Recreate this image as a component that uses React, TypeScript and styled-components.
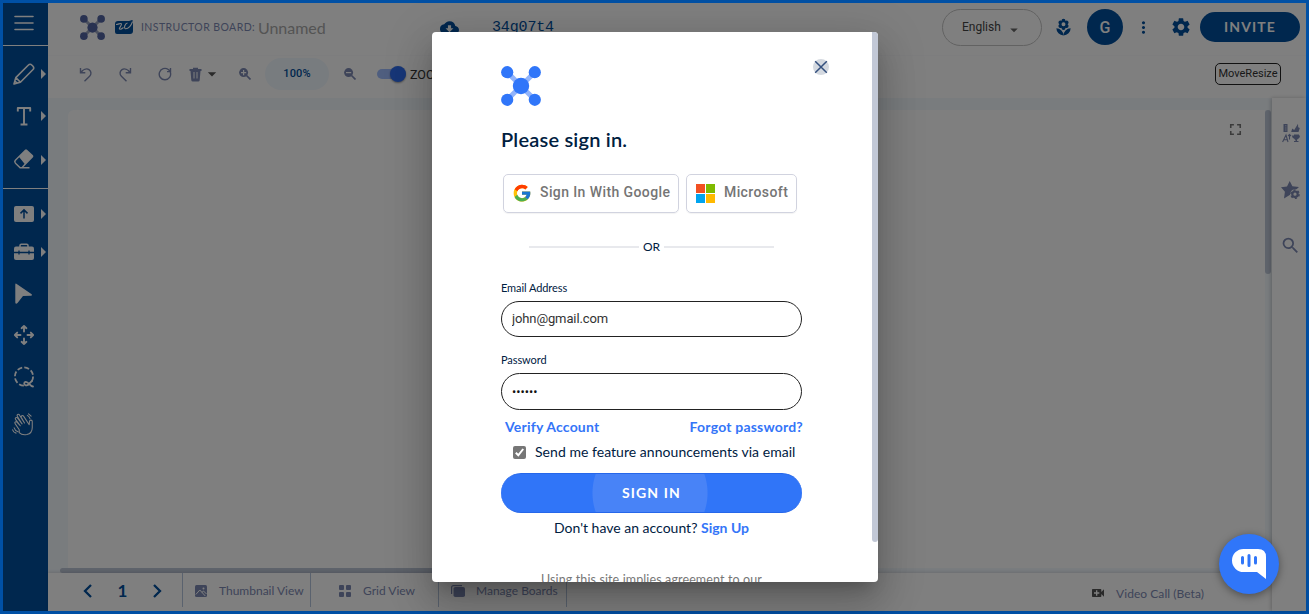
import React from 'react';
import styled, { createGlobalStyle } from 'styled-components';
import {
  MdCloudDownload, MdSettings, MdMoreVert, MdLocalFlorist, MdArrowDropDown,
  MdFullscreen, MdSearch, MdVideoCall,
} from 'react-icons/md';

const GlobalStyle = createGlobalStyle`
  *, *::before, *::after { box-sizing: border-box; }
  body { margin: 0; overflow: hidden; font-family: Lato, "Liberation Sans", sans-serif; }
  button, input { font: inherit; margin: 0; }
  svg { display: block; flex: none; }
`;

const NAVY = '#004e9c';
const SLATE = '#7d89b2';

/* ---------- page frame ---------- */
const Frame = styled.div`
  position: relative;
  display: flex;
  width: 1309px;
  height: 614px;
  border: 3px solid #0050a5;
  background: #fff;
`;
const Main = styled.div`
  flex: 1;
  min-width: 0;
  display: flex;
  flex-direction: column;
`;
const Gap = styled.span<{ $w: number }>`
  width: ${p => p.$w}px;
  flex: none;
`;

/* ---------- left tool rail ---------- */
const Rail = styled.nav`
  width: 45px;
  flex: none;
  display: flex;
  flex-direction: column;
  background: ${NAVY};
  color: #fff;
`;
const RailItem = styled.div<{ $h: number; $line?: boolean }>`
  height: ${p => p.$h}px;
  display: flex;
  align-items: center;
  padding-left: 10px;
  gap: 6px;
  border-bottom: ${p => (p.$line ? '1px solid #fff' : 'none')};
`;
const Flyout = styled.span`
  width: 0;
  height: 0;
  border: solid transparent;
  border-width: 5.5px 0 5.5px 5.5px;
  border-left-color: #fff;
`;

/* ---------- header ---------- */
const Header = styled.header`
  height: 53px;
  display: flex;
  align-items: center;
  padding: 0 6px 4px 32px;
  border-bottom: 1px solid #fbfbfd;
`;
const BoardLabel = styled.span`
  margin-left: 8px;
  font-size: 10.5px;
  letter-spacing: 0.42px;
  color: ${SLATE};
  white-space: nowrap;
  width: 117px;
`;
const BoardName = styled.span`
  width: 182px;
  font-size: 16px;
  letter-spacing: -0.05px;
  color: #a8a8a8;
`;
const BoardCode = styled.span`
  margin: 0 auto 0 33px;
  font: 15px "Liberation Mono", monospace;
  letter-spacing: -0.15px;
  color: ${NAVY};
`;
const Language = styled.div`
  width: 100px;
  height: 37px;
  display: flex;
  align-items: center;
  gap: 4px;
  padding-left: 19px;
  border: 1px solid #c4c4c4;
  border-radius: 19px;
  font: 12px Roboto, sans-serif;
  color: #444;
  svg { margin-top: 6px; }
`;
const Avatar = styled.div`
  width: 36px;
  height: 36px;
  margin: 0 11px 0 14px;
  display: grid;
  place-items: center;
  border-radius: 50%;
  background: ${NAVY};
  color: #fff;
  font: 500 16px Roboto, sans-serif;
`;
const Invite = styled.button`
  width: 100px;
  height: 30px;
  margin-left: 8px;
  padding: 0 0 1px;
  border: 0;
  border-radius: 15px;
  background: ${NAVY};
  color: #fff;
  font-size: 14px;
  font-weight: 700;
  letter-spacing: 1.15px;
`;

/* ---------- toolbar ---------- */
const Toolbar = styled.div`
  height: 42px;
  display: flex;
  align-items: center;
  padding: 0 25px 6px 31px;
  color: ${SLATE};
`;
const Tool = styled.span<{ $gap: number }>`
  display: flex;
  align-items: center;
  margin-right: ${p => p.$gap}px;
`;
const ZoomLevel = styled.span`
  width: 64px;
  height: 32px;
  margin-right: 15px;
  display: grid;
  place-items: center;
  padding-bottom: 1px;
  border-radius: 16px;
  background: #f1f8ff;
  color: ${NAVY};
  font: 500 11px Roboto, sans-serif;
  letter-spacing: 0.15px;
`;
const Switch = styled.span`
  width: 29px;
  height: 10px;
  margin: 0 4px 0 21px;
  display: flex;
  align-items: center;
  justify-content: flex-end;
  border-radius: 5px;
  background: #9fbcff;
  &::after {
    content: '';
    width: 16px;
    height: 16px;
    border-radius: 50%;
    background: #2f6dee;
    box-shadow: 0 1px 2px rgba(0, 0, 0, 0.4);
  }
`;
const SwitchLabel = styled.span`
  margin-right: auto;
  font: 12.5px Roboto, sans-serif;
  color: #333;
`;
const MoveResize = styled.span`
  width: 66px;
  height: 22px;
  display: grid;
  place-items: center;
  padding-bottom: 2px;
  border: 1px solid #222;
  border-radius: 5px;
  font: 11px Roboto, sans-serif;
  color: #333;
`;

/* ---------- board ---------- */
const Workspace = styled.div`
  flex: 1;
  min-height: 0;
  display: flex;
`;
const BoardColumn = styled.div`
  width: 1224px;
  display: flex;
  flex-direction: column;
`;
const BoardArea = styled.div`
  height: 475px;
  flex: none;
  display: grid;
  grid-template: 12px 458px 5px / 12px 8px 1197px 7px;
  background: #f2f8fd;
`;
const Sheet = styled.div`
  grid-area: 2 / 3;
  display: flex;
  justify-content: flex-end;
  padding: 10px 20px 0 0;
  border-radius: 6px 0 0 0;
  background: #fff;
  color: #777;
`;
const ScrollY = styled.div`
  grid-area: 2 / 4;
  width: 6px;
  height: 164px;
  border-radius: 3px;
  background: #bdc6d6;
`;
const ScrollX = styled.div`
  grid-area: 3 / 2 / 4 / 4;
  width: 580px;
  border-radius: 3px;
  background: #bdc6d6;
`;
const SidePanel = styled.aside`
  width: 34px;
  display: flex;
  flex-direction: column;
  align-items: center;
  padding: 25px 0 0 3px;
  background: #fff;
  color: ${SLATE};
  box-shadow: -1px 0 4px rgba(0, 0, 0, 0.22);
`;
const SideIcon = styled.span<{ $gap: number }>`
  margin-bottom: ${p => p.$gap}px;
`;

/* ---------- footer ---------- */
const Footer = styled.footer`
  height: 38px;
  flex: none;
  display: flex;
  color: ${SLATE};
  background: #fff;
  box-shadow: 0 -1px 3px rgba(0, 0, 0, 0.12);
`;
const Pager = styled.div`
  width: 135px;
  height: 34px;
  display: flex;
  align-items: center;
  justify-content: space-between;
  padding: 1px 20px 0 35px;
  border-right: 1px solid #b4c4dc;
  color: ${NAVY};
  font-size: 17px;
  font-weight: 700;
`;
const ViewTab = styled.div<{ $pad: number; $gap: number }>`
  width: 128px;
  height: 34px;
  display: flex;
  align-items: center;
  gap: ${p => p.$gap}px;
  padding: 1px 0 0 ${p => p.$pad}px;
  border-right: 1px solid #b4c4dc;
  font-size: 12px;
  white-space: nowrap;
`;
const VideoCall = styled.div`
  height: 38px;
  margin-left: auto;
  display: flex;
  align-items: center;
  gap: 10px;
  padding: 2px 68px 0 0;
  font-size: 12px;
  letter-spacing: 0.05px;
  svg { color: #555; }
`;

/* ---------- overlay and dialog ---------- */
const Backdrop = styled.div`
  position: absolute;
  inset: 0;
  display: flex;
  justify-content: center;
  align-items: center;
  background: rgba(0, 0, 0, 0.5);
`;
const Dialog = styled.div`
  width: 446px;
  height: 550px;
  margin-left: 1px;
  display: flex;
  border-radius: 4px;
  overflow: hidden;
  background: #fff;
  color: #00203f;
  box-shadow: 0 11px 15px -7px rgba(0, 0, 0, 0.2), 0 24px 38px 3px rgba(0, 0, 0, 0.14),
    0 9px 46px 8px rgba(0, 0, 0, 0.12);
`;
const DialogScroll = styled.div`
  width: 440px;
  height: 550px;
  overflow: hidden;
  padding: 27px 70px 0 69px;
  display: flex;
  flex-direction: column;
`;
const DialogBar = styled.div`
  width: 6px;
  height: 510px;
  border-radius: 0 0 3px 3px;
  background: #c2c8d6;
`;
const DialogTop = styled.div`
  height: 47px;
  flex: none;
  display: flex;
  justify-content: space-between;
  margin-right: -27px;
  > :first-child { margin-top: 7px; }
`;
const CloseButton = styled.span`
  width: 16px;
  height: 16px;
  display: grid;
  place-items: center;
  border-radius: 50%;
  background: #d4d9e0;
`;
const Title = styled.h2`
  margin: 18px 0 0;
  font-size: 20px;
  line-height: 30px;
  font-weight: 600;
  letter-spacing: 0.2px;
  white-space: nowrap;
`;
const Providers = styled.div`
  display: flex;
  gap: 7px;
  margin: 20px 0 0 2px;
`;
const Provider = styled.div<{ $w: number; $pad: number; $gap: number }>`
  width: ${p => p.$w}px;
  height: 39px;
  display: flex;
  align-items: center;
  gap: ${p => p.$gap}px;
  padding: 0 0 0 ${p => p.$pad}px;
  border: 1px solid #d1d3df;
  border-radius: 5px;
  box-shadow: 0 1px 1px rgba(0, 0, 0, 0.05);
  color: #757575;
  font: 500 14px Roboto, sans-serif;
  letter-spacing: 0.4px;
  white-space: nowrap;
  span { margin-top: -3px; }
`;
const Divider = styled.div`
  width: 245px;
  height: 16px;
  margin: 26px 0 0 28px;
  display: flex;
  align-items: center;
  gap: 4px;
  font-size: 12px;
  &::before, &::after {
    content: '';
    flex: 1;
    height: 2px;
    background: #e8e9ed;
  }
`;
const Label = styled.label<{ $top: number }>`
  height: 16px;
  margin-top: ${p => p.$top}px;
  font-size: 11px;
  line-height: 16px;
  letter-spacing: -0.08px;
`;
const Input = styled.input<{ $h: number }>`
  width: 301px;
  height: ${p => p.$h}px;
  margin-top: 5px;
  flex: none;
  padding: 0 10px 2px;
  border: 1px solid #222;
  border-radius: 19px;
  outline: 0;
  background: #fff;
  color: #333;
  font: 13px Roboto, sans-serif;
  letter-spacing: -0.12px;
  &[type='password'] { font-size: 12.5px; letter-spacing: 0.05px; padding-bottom: 1px; color: #111; }
`;
const Links = styled.div`
  height: 20px;
  margin: 7px -1px 0 4px;
  display: flex;
  justify-content: space-between;
  font-size: 14px;
  line-height: 20px;
  letter-spacing: 0.2px;
`;
const Link = styled.a`
  color: #3475f8;
  font-weight: 700;
`;
const Consent = styled.label`
  height: 20px;
  margin: 6px 0 0 12px;
  display: flex;
  align-items: center;
  gap: 9px;
  font-size: 14px;
  letter-spacing: 0.04px;
  white-space: nowrap;
`;
const Check = styled.span`
  width: 13px;
  height: 13px;
  margin-top: 1px;
  border-radius: 2px;
  background: #767676;
`;
const SignIn = styled.button`
  width: 301px;
  height: 40px;
  flex: none;
  margin-top: 13px;
  padding: 0 0 1px;
  border: 1px solid #2667ea;
  border-width: 1px 0;
  border-radius: 20px;
  background: radial-gradient(circle at 149px 19px, #4883f7 57px, #3075f8 58px);
  color: #fff;
  font-size: 14px;
  font-weight: 700;
  letter-spacing: 1.1px;
`;
const SignUp = styled.p`
  margin: 5px 0 0;
  text-align: center;
  font-size: 14px;
  line-height: 20px;
`;
const Legal = styled.p`
  margin: 33px 0 0;
  text-align: center;
  font-size: 12.5px;
  line-height: 18px;
  letter-spacing: 0.12px;
  color: #777;
`;
const ChatBubble = styled.div`
  position: absolute;
  left: 1216px;
  top: 531px;
  width: 60px;
  height: 60px;
  display: grid;
  place-items: center;
  border-radius: 50%;
  background: #3076f9;
  box-shadow: 0 2px 8px rgba(0, 0, 0, 0.4);
`;

/* ---------- drawings ---------- */
const Molecule = ({ size, color, arm }: { size: number; color: string; arm: string }) => (
  <svg width={size} height={size} viewBox="0 0 40 40">
    <path d="M6 6 34 34M34 6 6 34" stroke={arm} strokeWidth="5" />
    <g fill={color}>
      <circle cx="6.2" cy="6.2" r="6.1" /><circle cx="33.8" cy="6.2" r="6.1" />
      <circle cx="6.2" cy="33.8" r="6.1" /><circle cx="33.8" cy="33.8" r="6.1" />
      <circle cx="20" cy="20" r="8.2" />
    </g>
  </svg>
);

const Line = ({ children, size = 22, width = 1.6 }: { children: React.ReactNode; size?: number; width?: number }) => (
  <svg width={size} height={size} viewBox="0 0 22 22" fill="none" stroke="currentColor"
    strokeWidth={width} strokeLinecap="round" strokeLinejoin="round">{children}</svg>
);

const Hamburger = () => <Line><path d="M2 3.5h18M2 10h18M2 16.5h18" /></Line>;
const Pencil = () => (
  <Line><path d="m1 21 1.8-6.4L15.2 2.2a2.7 2.7 0 0 1 3.8 0l.8.8a2.7 2.7 0 0 1 0 3.8L7.4 19.2ZM3 14.7l4.3 4.4M2.1 18.2l1.7 1.7" /></Line>
);
const TextTool = () => <Line width={1.9}><path d="M4.8 5.5V3h12.4v2.5M11 3v16.5M8.5 19.5h5" strokeLinecap="square" /></Line>;
const Eraser = () => (
  <svg width="22" height="22" viewBox="0 0.5 22 22" fill="currentColor">
    <path fillRule="evenodd" d="M12 1.2q1-.7 2 0l6 5.6q.8 1 0 2L10.5 18.6H16.5v1.5H6.8L2 15.3q-1.8-2-.4-3.8ZM6.300 8.8 2.9 12.300q-.7.9 0 1.900L7.400 18.500h1.300l2.800-3.300Z" />
  </svg>
);
const Upload = () => (
  <svg width="22" height="22" viewBox="0 0 22 22">
    <rect x="1" y="3" width="20" height="16" rx="2" fill="currentColor" />
    <path d="M11 15.5V7M7.5 10.4 11 6.9l3.5 3.500" fill="none" stroke={NAVY} strokeWidth="1.5" />
  </svg>
);
const Toolbox = () => (
  <svg width="22" height="22" viewBox="0 0 22 22">
    <path d="M7 6V4.500q0-1.300 1.300-1.300h5.400q1.300 0 1.300 1.300V6" fill="none" stroke="currentColor" strokeWidth="1.5" />
    <path d="M3 5.500h16q2 0 2 2V17q0 2-2 2H3q-2 0-2-2V7.500q0-2 2-2Z" fill="currentColor" />
    <path d="M1 11.500h20M6 9.500v4M16 9.500v4" stroke={NAVY} strokeWidth="1.3" />
  </svg>
);
const Cursor = () => (
  <svg width="22" height="22" viewBox="0 0 22 22" fill="currentColor">
    <path d="M2.300 1.600q0-1.500 1.400-.7l15 10.300q1 1.400-.7 1.500l-8 .4-5.500 7q-1.900 1.400-2.200-.7Z" />
  </svg>
);
const Move = () => (
  <Line width={1.9}><path d="M11 7.500V2M11 14.500V20M7.500 11H2M14.500 11H20M8.600 4.200 11 1.900l2.400 2.300M8.600 17.800l2.400 2.300 2.400-2.300M4.200 8.600 1.900 11l2.300 2.400M17.800 8.600 20.100 11l-2.300 2.400" /></Line>
);
const Lasso = () => (
  <Line width={1.8}>
    <circle cx="11" cy="10.500" r="9.100" strokeDasharray="5 2.150" strokeLinecap="butt" />
    <path d="M20 20.500c-3 0-4.500-5-7.300-4.600-2 .4-2 2.900 0 3.400 2.800.8 4-2.600 6.300-4.300" fill={NAVY} />
  </Line>
);
const Hand = () => (
  <svg width="23" height="23" viewBox="2 0 24 24" fill="none" stroke="currentColor" strokeWidth="1.1" strokeLinecap="round" strokeLinejoin="round" overflow="visible">
    <path d="M8.500 20.500c2 2.100 5 2.600 8 2 3.400-.9 5.600-3.700 5.600-7.500V8.800c0-1.800-2.700-1.900-2.900 0l-.3 3.400L13 3.300c-1-1.500-3.100-.3-2.300 1.300l3.300 5.800M14 10.400 8.700 2c-1-1.500-3.100-.2-2.200 1.300l5 8.100M11.500 11.400 6.700 5.200C5.600 3.900 3.700 5.200 4.600 6.600l5 6.700M9.600 13.300l-3.500-3.700c-1.300-1.300-2.800.2-1.900 1.500l4.300 6.400L8.500 20.500M17 2.500c1.500.7 2.300 1.800 2.700 3.400M18.200.8l2.700 2.500M3.200 15.500c.6 2 2 3.500 4 4.100M1.600 17.500c.5 1.800 1.700 3 3.600 3.500" />
  </svg>
);
const WriteLogo = () => (
  <svg width="18" height="14" viewBox="0 0 18 14">
    <path d="M3 1h11l3-1q1 0 1 2v9q0 3-3 3H2q-2 0-2-2V4q0-3 3-3Z" fill={NAVY} />
    <path d="M1 4.500C3.500 4.500 6 2.500 6.500 4 6.600 6 3 8.800 5 9.200 6.500 9.300 7.500 8.300 8.500 7.500M12.500 3C10 3.500 8.500 8 10.500 8.800 13.500 9 16.500 5 17.600 1.500" fill="none" stroke="#fff" strokeWidth="1.100" />
  </svg>
);
const Undo = ({ flip }: { flip?: boolean }) => (
  <svg width="14" height="15" viewBox="0 0 14 15" fill="none" stroke="currentColor" strokeWidth="1.400"
    transform={flip ? 'scale(-1 1)' : undefined}>
    <path d="M1.500 1v4.800h4.800M1.800 5.500C4 2.600 7.500 1 10 2.600c2.500 1.800 2.500 4.700.6 6.600L5.500 14.300" />
  </svg>
);
const Reload = () => (
  <svg width="14" height="14" viewBox="0 0 14 14" fill="none" stroke="currentColor" strokeWidth="1.400">
    <path d="M12.300 5.200a5.700 5.700 0 1 1-2-2.700l1.700 1.600M12.500 1v3.600H9" />
  </svg>
);
const Trash = () => (
  <svg width="13" height="15" viewBox="0 0 13 15">
    <path d="M4 2V.7h5V2h3.500v2h-1l-.8 9.200q-.2 1.300-1.500 1.300H3.800q-1.300 0-1.500-1.300L1.500 4h-1V2Z" fill="currentColor" />
    <path d="M5 5v6.500M8 5v6.500" stroke="#fff" strokeWidth="1" />
  </svg>
);
const Magnifier = ({ plus }: { plus?: boolean }) => (
  <svg width="12" height="12" viewBox="0 0 12 12">
    <circle cx="4.600" cy="4.600" r="4.500" fill="currentColor" />
    <path d="m7.500 7.500 4 4" stroke="currentColor" strokeWidth="1.700" />
    <path d={plus ? 'M2 4.600h5.200M4.600 2v5.200' : 'M2 4.600h5.200'} stroke="#fff" strokeWidth="1.200" />
  </svg>
);
const Chevron = ({ right }: { right?: boolean }) => (
  <svg width="10" height="14" viewBox="0 0 10 14" fill="none" stroke="currentColor" strokeWidth="2.300">
    <path d={right ? 'm2 1 6 6-6 6' : 'M8 1 2 7l6 6'} />
  </svg>
);
const Thumbnail = () => (
  <svg width="12" height="12" viewBox="0 0 12 12">
    <rect width="12" height="12" rx="1.500" fill="currentColor" />
    <circle cx="8.500" cy="3.500" r="1" fill="#fff" />
    <path d="m.8 9.500 4-4.500 5.500 6M6.800 7.500l1.700-1.500 3 3" fill="none" stroke="#fff" strokeWidth="1" />
  </svg>
);
const GridIcon = () => (
  <svg width="12" height="12" viewBox="0 0 12 12" fill="currentColor">
    <rect width="5" height="5" rx="1" /><rect x="7" width="5" height="5" rx="1" />
    <rect y="7" width="5" height="5" rx="1" /><rect x="7" y="7" width="5" height="5" rx="1" />
  </svg>
);
const Stack = () => (
  <svg width="14" height="12" viewBox="0 0 14 12">
    <path d="M.6 9V2.500Q.6.600 2.500.600H11" fill="none" stroke="currentColor" strokeWidth="1.200" />
    <rect x="2.500" y="2" width="11.500" height="10" rx="1.800" fill="currentColor" />
  </svg>
);
const Shapes = () => (
  <svg width="18" height="20" viewBox="0 0 18 20" fill="currentColor">
    <path d="M1.500 1h4v8h-4ZM9.200 9l1-3.500 2 1.500L16 .8l.2 3.500 1.600.7-1.300 4ZM12 11.500h5v1h1c0 2-1 3-2 3.200-.5.800-1 1-1 1.300v1h1.500v1h-4.500v-1H13.500v-1c-.6-.2-1-.6-1.200-1.300-1.300-.3-2.300-1.200-2.300-3.200h2Z" />
    <path d="M.6 19 4 12l2 7M2 16.800h3.500M7.500 16.500v-5M6 13l1.500-1.500L9 13" fill="none" stroke="currentColor" strokeWidth="1.100" />
    <path d="M3 2.800h1.500M3 5h1.500M3 7h1.500" stroke="#fff" strokeWidth=".600" />
  </svg>
);
const StarGear = () => (
  <svg width="19" height="18" viewBox="0 0 19 18">
    <path d="m8.700 0 2.700 5.300 6.600.6-4.800 4.500 1 6-5.500-2.400L3 17.500l.9-6.700L0 6.300l6-.9Z" fill="currentColor" />
    <circle cx="14" cy="13.200" r="4.900" fill="#fff" />
    <circle cx="14" cy="13.200" r="2.700" fill="none" stroke="currentColor" strokeWidth="2.200" />
    <circle cx="14" cy="13.200" r="4.100" fill="none" stroke="currentColor" strokeWidth="1.500" strokeDasharray="2.150 2.143" />
  </svg>
);
const Google = () => (
  <svg width="20" height="20" viewBox="0 2 48 48">
    <path fill="#ffc107" d="M43.600 20.100H42V20H24v8h11.300C33.700 32.700 29.200 36 24 36c-6.600 0-12-5.400-12-12s5.400-12 12-12c3.100 0 5.800 1.200 8 3l5.700-5.700C34 6 29.300 4 24 4 13 4 4 13 4 24s9 20 20 20 20-9 20-20c0-1.300-.1-2.600-.4-3.900z" />
    <path fill="#ff3d00" d="m6.300 14.700 6.600 4.800C14.700 15.100 19 12 24 12c3.100 0 5.800 1.200 8 3l5.700-5.700C34 6 29.300 4 24 4 16.300 4 9.700 8.300 6.300 14.700z" />
    <path fill="#4caf50" d="M24 44c5.200 0 9.900-2 13.400-5.200l-6.200-5.200C29.200 35.100 26.700 36 24 36c-5.200 0-9.600-3.300-11.300-8l-6.500 5C9.500 39.600 16.200 44 24 44z" />
    <path fill="#1976d2" d="M43.600 20.100H42V20H24v8h11.300c-.8 2.200-2.200 4.200-4.100 5.600l6.200 5.200C37 39.200 44 34 44 24c0-1.300-.1-2.600-.4-3.900z" />
  </svg>
);
const Microsoft = () => (
  <svg width="19" height="19" viewBox="0 0 19 19">
    <path fill="#f25022" d="M0 0h9v9H0z" /><path fill="#7fba00" d="M10 0h9v9h-9z" />
    <path fill="#00a4ef" d="M0 10h9v9H0z" /><path fill="#ffb900" d="M10 10h9v9h-9z" />
  </svg>
);
const Cross = () => (
  <svg width="14" height="14" viewBox="0 0 14 14" stroke="#34507e" strokeWidth="1.500">
    <path d="m1.200 1.200 11.600 11.600M12.800 1.200 1.200 12.800" />
  </svg>
);
const Tick = () => (
  <svg width="13" height="13" viewBox="0 0 13 13" fill="none" stroke="#fff" strokeWidth="2">
    <path d="m2.800 6.800 2.500 2.500 4.900-6.300" />
  </svg>
);
const ChatGlyph = () => (
  <svg width="34" height="30" viewBox="0 0 34 30">
    <path d="M11.500 0H26q8 0 8 8v22l-9-7H11.500a11.500 11.500 0 0 1 0-23Z" fill="#fff" />
    <path d="M10.500 8.500v5.500M17 6.500v10M23.500 8.500v5.500" stroke="#3076f9" strokeWidth="3" strokeLinecap="round" />
  </svg>
);

const railTools = [
  { icon: <Hamburger />, h: 43, line: true },
  { icon: <Pencil />, h: 55, arrow: true },
  { icon: <TextTool />, h: 30, arrow: true },
  { icon: <Eraser />, h: 58, arrow: true, line: true },
  { icon: <Upload />, h: 50, arrow: true },
  { icon: <Toolbox />, h: 25, arrow: true },
  { icon: <Cursor />, h: 59 },
  { icon: <Move />, h: 24 },
  { icon: <Lasso />, h: 60 },
  { icon: <Hand />, h: 34 },
];

export default function App() {
  return (
    <Frame>
      <GlobalStyle />
      <Rail>
        {railTools.map((t, i) => (
          <RailItem key={i} $h={t.h} $line={t.line}>
            {t.icon}
            {t.arrow && <Flyout />}
          </RailItem>
        ))}
      </Rail>
      <Main>
        <Header>
          <Molecule size={25} color="#5265a2" arm="#99a3bf" />
          <Gap $w={10} />
          <WriteLogo />
          <BoardLabel>INSTRUCTOR BOARD:</BoardLabel>
          <BoardName>Unnamed</BoardName>
          <MdCloudDownload size={19} color={NAVY} />
          <BoardCode>34g07t4</BoardCode>
          <Language>English<MdArrowDropDown size={18} color="#666" /></Language>
          <Gap $w={12} />
          <MdLocalFlorist size={19} color={NAVY} />
          <Avatar>G</Avatar>
          <MdMoreVert size={19} color={NAVY} />
          <Gap $w={17} />
          <MdSettings size={22} color={NAVY} />
          <Invite>INVITE</Invite>
        </Header>
        <Toolbar>
          <Tool $gap={25}><Undo /></Tool>
          <Tool $gap={26}><Undo flip /></Tool>
          <Tool $gap={17}><Reload /></Tool>
          <Tool $gap={17}><Trash /><MdArrowDropDown size={20} color="#555" /></Tool>
          <Tool $gap={14}><Magnifier plus /></Tool>
          <ZoomLevel>100%</ZoomLevel>
          <Magnifier />
          <Switch />
          <SwitchLabel>ZOOM</SwitchLabel>
          <MoveResize>MoveResize</MoveResize>
        </Toolbar>
        <Workspace>
          <BoardColumn>
            <BoardArea>
              <Sheet><MdFullscreen size={19} /></Sheet>
              <ScrollY />
              <ScrollX />
            </BoardArea>
            <Footer>
              <Pager><Chevron /><span>1</span><Chevron right /></Pager>
              <ViewTab $pad={12} $gap={12}><Thumbnail />Thumbnail View</ViewTab>
              <ViewTab $pad={28} $gap={12}><GridIcon />Grid View</ViewTab>
              <ViewTab $pad={12} $gap={11}><Stack />Manage Boards</ViewTab>
              <VideoCall><MdVideoCall size={16} />Video Call (Beta)</VideoCall>
            </Footer>
          </BoardColumn>
          <SidePanel>
            <SideIcon $gap={38}><Shapes /></SideIcon>
            <SideIcon $gap={36}><StarGear /></SideIcon>
            <SideIcon $gap={0}><MdSearch size={21} /></SideIcon>
          </SidePanel>
        </Workspace>
      </Main>
      <Backdrop>
        <Dialog>
          <DialogScroll>
            <DialogTop>
              <Molecule size={40} color="#3076f9" arm="#92b4fb" />
              <CloseButton><Cross /></CloseButton>
            </DialogTop>
            <Title>Please sign in.</Title>
            <Providers>
              <Provider $w={176} $pad={8} $gap={8}><Google /><span>Sign In With Google</span></Provider>
              <Provider $w={111} $pad={9} $gap={9}><Microsoft /><span>Microsoft</span></Provider>
            </Providers>
            <Divider>OR</Divider>
            <Label $top={26}>Email Address</Label>
            <Input $h={36} defaultValue="john@gmail.com" />
            <Label $top={15}>Password</Label>
            <Input $h={37} type="password" defaultValue="secret" />
            <Links><Link>Verify Account</Link><Link>Forgot password?</Link></Links>
            <Consent><Check><Tick /></Check>Send me feature announcements via email</Consent>
            <SignIn>SIGN IN</SignIn>
            <SignUp>Don't have an account? <Link>Sign Up</Link></SignUp>
            <Legal>Using this site implies agreement to our</Legal>
          </DialogScroll>
          <DialogBar />
        </Dialog>
      </Backdrop>
      <ChatBubble><ChatGlyph /></ChatBubble>
    </Frame>
  );
}
